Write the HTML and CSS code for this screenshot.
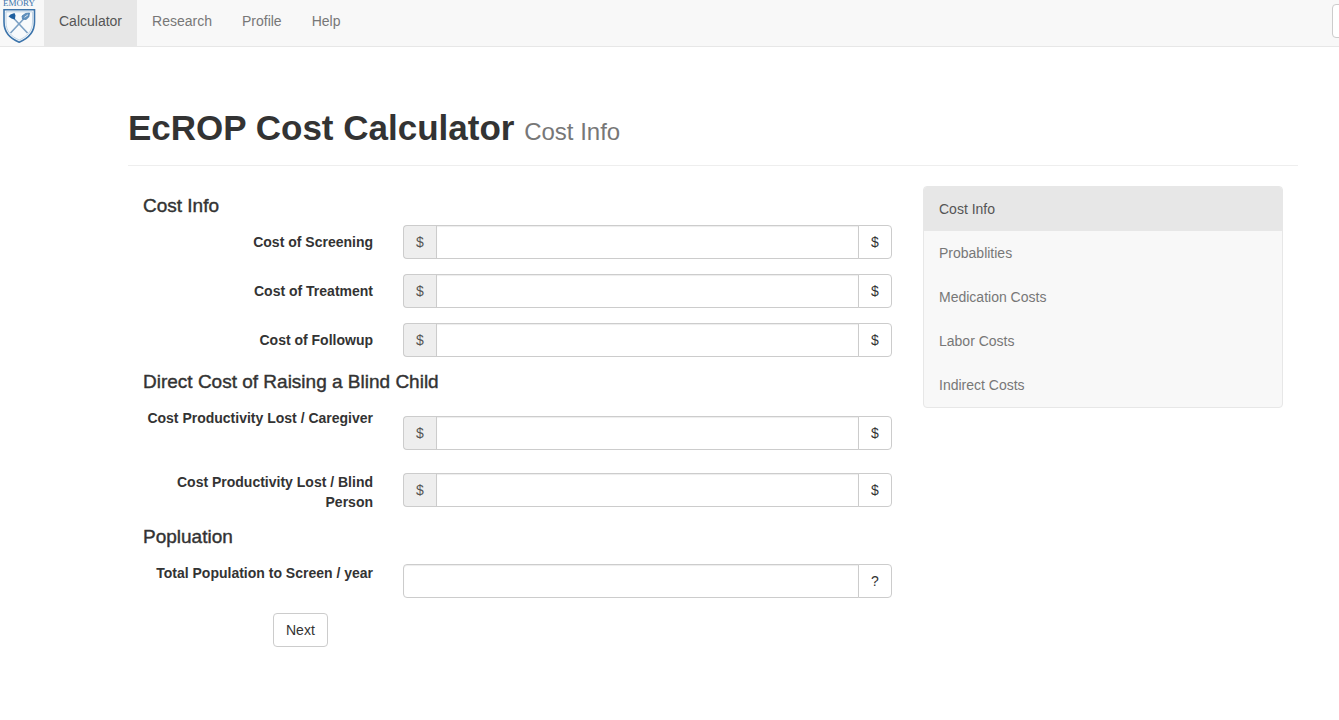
FILE: index.html
```html
<!DOCTYPE html>
<html lang="en">
<head>
<meta charset="utf-8">
<title>EcROP Cost Calculator</title>
<link rel="stylesheet" href="styles.css">
</head>
<body>
<nav class="navbar">
  <a class="brand" href="#" aria-label="Emory">
    <svg class="logo" width="37" height="46" viewBox="0 0 37 46">
      <text x="19" y="6" text-anchor="middle" class="logo-text">EMORY</text>
      <path d="M4 9.800H34.500V22C34.500 32 28 38.500 19.200 42.200C10 38.500 4 32 4 22Z" fill="#f8fafc" stroke="#3c74ab" stroke-width="1.600"/>
      <path d="M6 11.800H32.500V22C32.500 31 27 36.500 19.200 40C11 36.500 6 31 6 22Z" fill="none" stroke="#b4cbe0" stroke-width="0.800"/>
      <path d="M13 17.500L27.500 33M25 17.500L10.500 33" stroke="#7ba0c4" stroke-width="1.600"/>
      <path d="M8.500 16.500L10.500 14.500L14.500 13L15.500 15.500L14.800 19.500L11.500 18.500Z" fill="#1f5f9f"/>
      <path d="M22.500 19L22 16L25.500 13.500L29.500 13L28.800 17L26 19.500Z" fill="#6391bd" stroke="#497fb2" stroke-width="0.800"/>
      <path d="M24.500 17.300L28 14.800" stroke="#d9e5f0" stroke-width="1"/>
    </svg>
  </a>
  <a class="nav-link active" href="#">Calculator</a>
  <a class="nav-link" href="#">Research</a>
  <a class="nav-link" href="#">Profile</a>
  <a class="nav-link" href="#">Help</a>
  <input class="search" type="text" aria-label="Search">
</nav>
<div class="container">
  <header class="page-header">
    <h1>EcROP Cost Calculator <small>Cost Info</small></h1>
  </header>
  <div class="columns">
    <form class="main">
      <h4>Cost Info</h4>
      <div class="group">
        <label for="screening">Cost of Screening</label>
        <div class="field"><span class="addon">$</span><input id="screening" type="text"><button type="button">$</button></div>
      </div>
      <div class="group">
        <label for="treatment">Cost of Treatment</label>
        <div class="field"><span class="addon">$</span><input id="treatment" type="text"><button type="button">$</button></div>
      </div>
      <div class="group">
        <label for="followup">Cost of Followup</label>
        <div class="field"><span class="addon">$</span><input id="followup" type="text"><button type="button">$</button></div>
      </div>
      <h4>Direct Cost of Raising a Blind Child</h4>
      <div class="group group-low">
        <label for="caregiver">Cost Productivity Lost / Caregiver</label>
        <div class="field"><span class="addon">$</span><input id="caregiver" type="text"><button type="button">$</button></div>
      </div>
      <div class="group group-mid">
        <label for="person">Cost Productivity Lost / Blind Person</label>
        <div class="field"><span class="addon">$</span><input id="person" type="text"><button type="button">$</button></div>
      </div>
      <h4>Popluation</h4>
      <div class="group group-mid">
        <label for="population">Total Population to Screen / year</label>
        <div class="field"><input id="population" type="text"><button type="button">?</button></div>
      </div>
      <div class="actions"><button class="next" type="button">Next</button></div>
    </form>
    <aside class="side">
      <nav class="side-nav" aria-label="Sections">
        <a class="active" href="#">Cost Info</a>
        <a href="#">Probablities</a>
        <a href="#">Medication Costs</a>
        <a href="#">Labor Costs</a>
        <a href="#">Indirect Costs</a>
      </nav>
    </aside>
  </div>
</div>
</body>
</html>
```
FILE: styles.css
```css
* { box-sizing: border-box; }
body {
  margin: 0;
  background: #fff;
  color: #333;
  font: 14px/20px "Liberation Sans", Arial, sans-serif;
}
a { color: #777; text-decoration: none; }
input, button { font: inherit; color: #333; }

.navbar {
  display: flex;
  align-items: flex-start;
  overflow: hidden;
  background: #f8f8f8;
  border-bottom: 1px solid #e7e7e7;
}
.brand { padding-right: 7px; }
.logo { display: block; }
.logo-text { font: 9px "Liberation Serif", serif; fill: #3c74ab; }
.nav-link { padding: 11px 15px 15px; }
.active { background: #e7e7e7; color: #555; }
.search {
  flex: none;
  width: 200px;
  height: 34px;
  margin: 4px -193px 0 auto;
  border: 1px solid #ccc;
  border-radius: 4px;
  background: #fff;
}

.container { padding: 61px 41px 20px 128px; }
.page-header {
  padding-bottom: 17px;
  border-bottom: 1px solid #eee;
  margin-bottom: 20px;
}
h1 { margin: 0; font-size: 35px; font-weight: 700; line-height: 40px; }
h1 small { font-size: 24px; font-weight: 400; line-height: 1; color: #777; }
h4 {
  margin: 0 0 9px;
  font-size: 19px;
  font-weight: 400;
  line-height: 20px;
  -webkit-text-stroke: 0.4px #333;
}

.columns { display: grid; grid-template-columns: 2fr 1fr; }
.main { padding: 10px 16px 0 15px; }
.group {
  display: grid;
  grid-template-columns: 230px 1fr;
  gap: 30px;
  align-items: start;
  margin-bottom: 15px;
}
.group label { padding-top: 7px; text-align: right; font-weight: 700; }
.group-low .field { margin-top: 15px; }
.group-mid .field { margin-top: 8px; }
.field { display: flex; height: 34px; }
.addon, .field input, .field button { border: 1px solid #ccc; }
.addon {
  width: 33px;
  padding: 6px 0;
  text-align: center;
  color: #555;
  background: #eee;
  border-right: 0;
  border-radius: 4px 0 0 4px;
}
.field input {
  flex: 1;
  min-width: 0;
  padding: 6px 12px;
  background: #fff;
  box-shadow: inset 0 1px 1px rgba(0, 0, 0, 0.075);
}
.field input:first-child { border-radius: 4px 0 0 4px; }
.field button {
  width: 34px;
  padding: 0;
  margin-left: -1px;
  background: #fff;
  border-radius: 0 4px 4px 0;
}
.actions { padding-left: 130px; }
.next {
  padding: 6px 12px;
  border: 1px solid #ccc;
  border-radius: 4px;
  background: #fff;
}

.side { padding: 0 15px; }
.side-nav {
  display: flex;
  flex-direction: column;
  overflow: hidden;
  border: 1px solid #e7e7e7;
  border-radius: 4px;
  background: #f8f8f8;
}
.side-nav a { padding: 12px 15px; }
```
